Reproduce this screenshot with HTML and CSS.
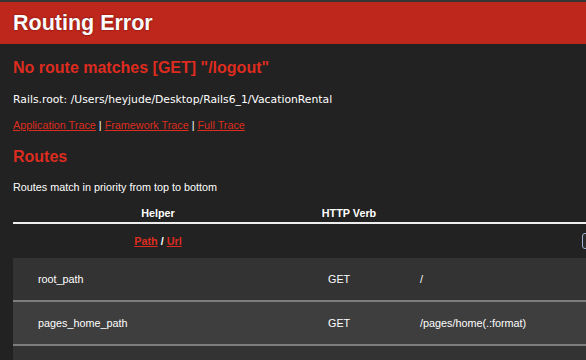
FILE: index.html
```html
<!DOCTYPE html>
<html lang="en">
<head>
    <meta charset="UTF-8">
    <title>Action Controller: Exception caught</title>
    <link rel="stylesheet" href="styles.css">
</head>
<body>
    <!-- Header -->
    <header class="header">
        <h1>Routing Error</h1>
    </header>

    <div class="content">
        <h2 class="error-title">No route matches [GET] "/logout"</h2>
        <p class="rails-root">Rails.root: /Users/heyjude/Desktop/Rails6_1/VacationRental</p>

        <div class="traces">
            <a href="#">Application Trace</a> | <a href="#">Framework Trace</a> | <a href="#">Full Trace</a>
        </div>

        <h2 class="routes-title">Routes</h2>
        <p class="routes-note">Routes match in priority from top to bottom</p>

        <!-- Routes table (path column runs past the window edge) -->
        <table class="route-table">
            <thead>
                <tr class="head-row">
                    <th class="col-helper">Helper</th>
                    <th class="col-verb">HTTP Verb</th>
                    <th class="col-path"></th>
                </tr>
                <tr class="filter-row">
                    <th><a href="#">Path</a> / <a href="#">Url</a></th>
                    <th></th>
                    <th><span class="search"></span></th>
                </tr>
            </thead>
            <tbody>
                <tr>
                    <td>root_path</td>
                    <td>GET</td>
                    <td>/</td>
                </tr>
                <tr>
                    <td>pages_home_path</td>
                    <td>GET</td>
                    <td>/pages/home(.:format)</td>
                </tr>
                <tr>
                    <td></td>
                    <td></td>
                    <td></td>
                </tr>
            </tbody>
        </table>
    </div>
</body>
</html>
```

FILE: styles.css
```css
/* General */
body {
    margin: 0;
    padding: 0;
    background-color: #222222;
    color: #ffffff;
    font-family: "Liberation Sans", Arial, sans-serif;
    font-size: 10.8px;
    overflow: hidden;
    border-top: 2px solid #363636;
}

a {
    color: #dd2c1f;
}

/* Header */
.header {
    background-color: #bd271c;
    height: 42px;
    padding: 0 13px;
    display: flex;
    align-items: center;
}

.header h1 {
    margin: 0;
    font-size: 21.5px;
    line-height: 24px;
    font-weight: bold;
    color: #ffffff;
    text-shadow: 0 0 2px #6e1009;
}

.content {
    padding: 0 13px;
}

.error-title,
.routes-title {
    margin: 0;
    font-size: 16px;
    line-height: 20px;
    color: #dd2c1f;
}

.error-title {
    margin-top: 14px;
}

.rails-root {
    margin: 14px 0 0;
    font-family: "DejaVu Sans", sans-serif;
    font-size: 10.8px;
    line-height: 16px;
}

.traces {
    margin-top: 10px;
    line-height: 14px;
}

.routes-title {
    margin-top: 15px;
}

.routes-note {
    margin: 13px 0 0;
    line-height: 14px;
}

/* Routes table */
.route-table {
    margin-top: 10px;
    border-collapse: collapse;
    table-layout: fixed;
    width: 862px;
}

.route-table th {
    padding: 0;
    font-weight: bold;
    text-align: center;
}

.col-helper { width: 290px; }
.col-verb { width: 92px; }

.head-row th {
    height: 18px;
    line-height: 18px;
    border-bottom: 2px solid #eeeeee;
}

.filter-row th {
    height: 34px;
}

.filter-row a {
    font-weight: bold;
}

/* search field, centred in the path column; only its left edge shows */
.search {
    display: inline-block;
    width: 106px;
    height: 16px;
    box-sizing: border-box;
    border: 1px solid #9fb2d2;
    border-radius: 3px;
    background: #2a2a2a;
    vertical-align: middle;
}

.route-table td {
    height: 42px;
    padding: 0 0 0 25px;
    border-bottom: 2px solid #7d7d7d;
    line-height: 14px;
}

.route-table tbody tr:nth-child(odd) {
    background-color: #333333;
}

.route-table tbody tr:nth-child(even) {
    background-color: #3e3e3e;
}
```
